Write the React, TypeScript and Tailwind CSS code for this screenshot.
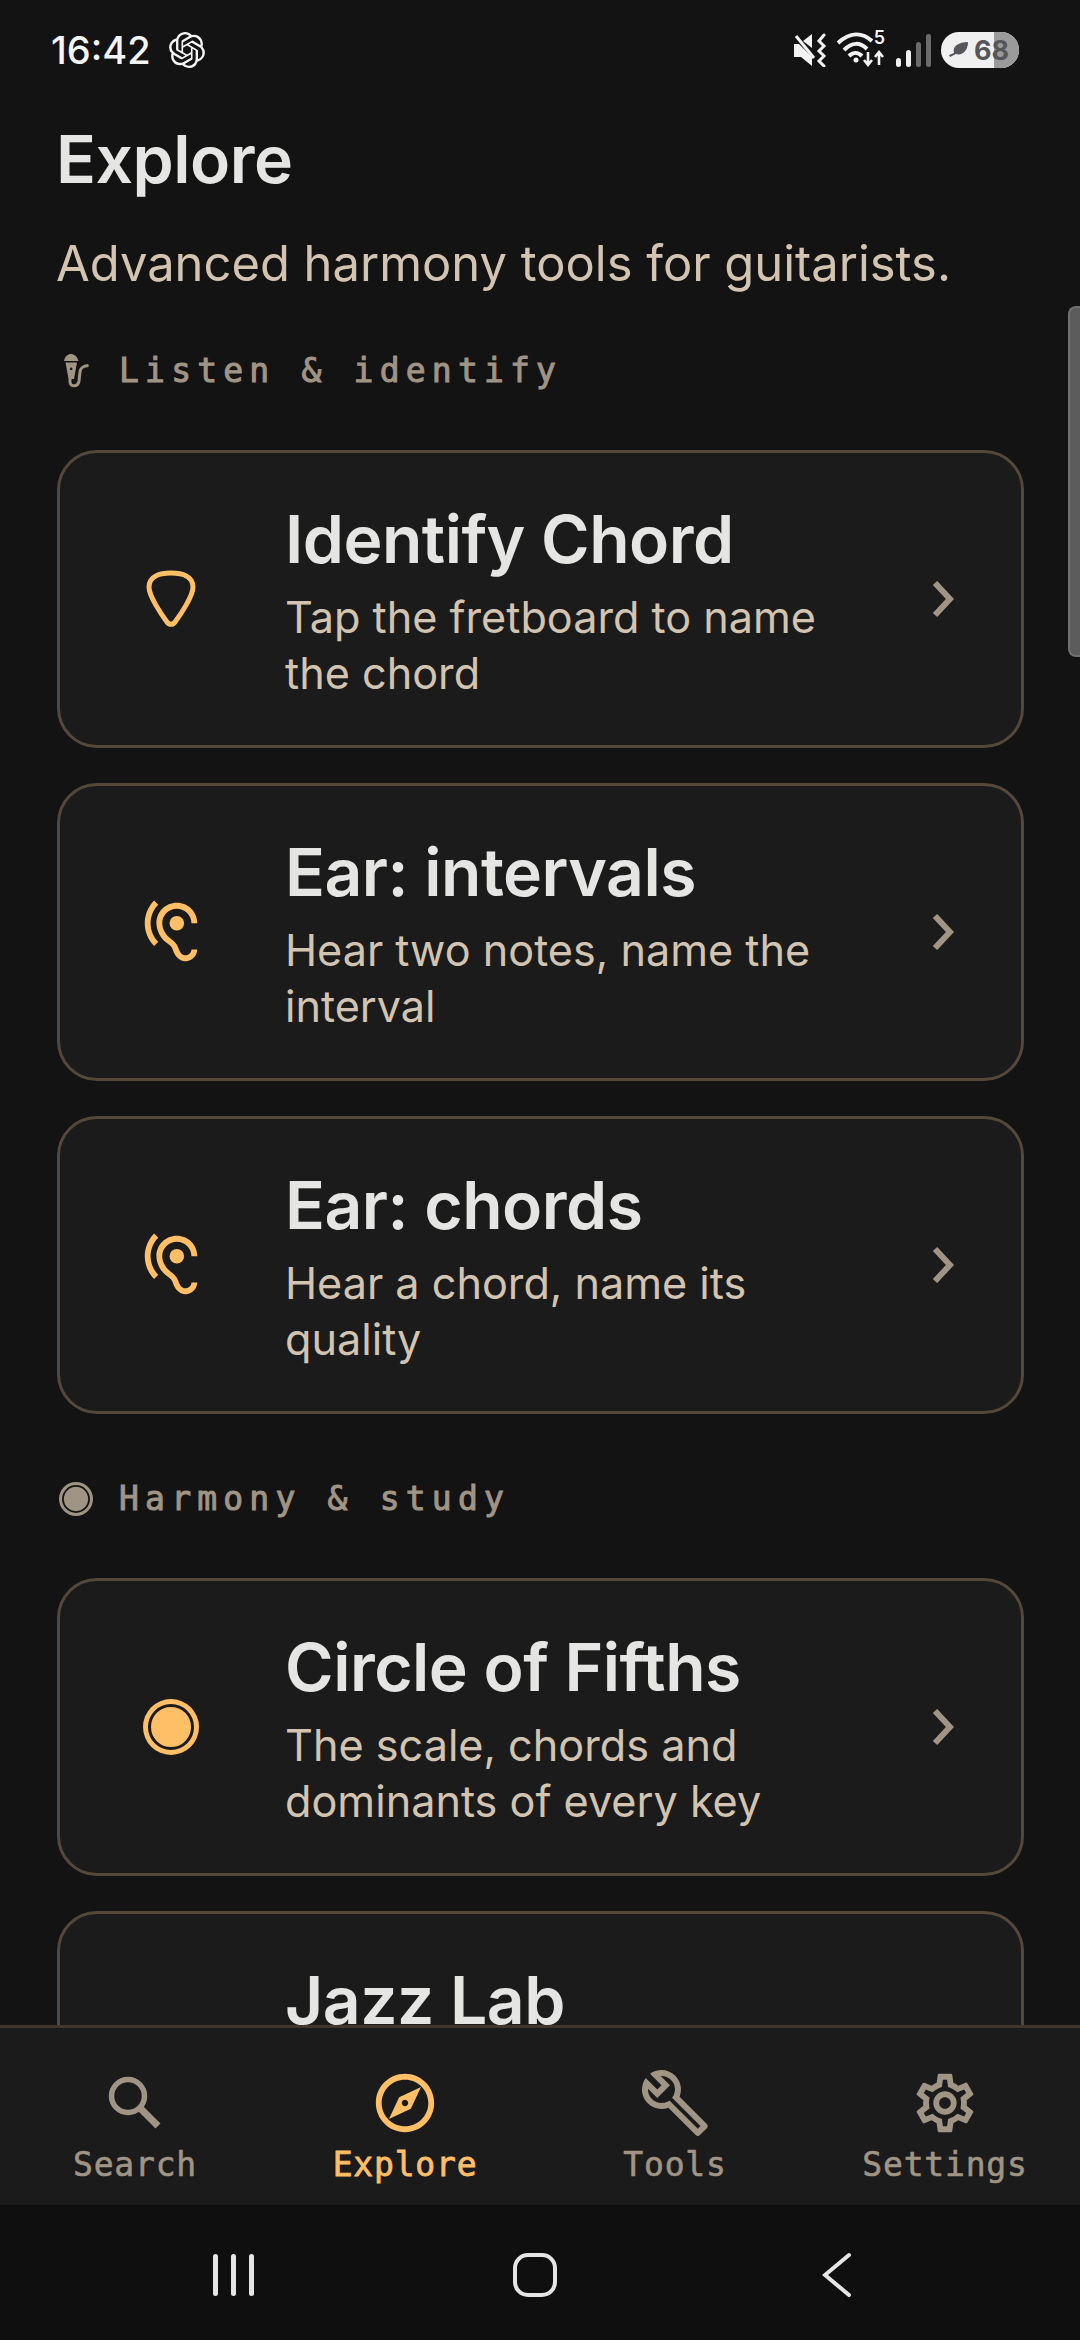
import { MdHearing, MdOutlineExplore, MdOutlineBuild, MdOutlineSettings } from 'react-icons/md'
import { SiOpenai } from 'react-icons/si'

const inter = 'font-["Inter",sans-serif]'
const mono = 'font-["DejaVu_Sans_Mono",monospace]'

function PickIcon() {
  return (
    <svg width="50" height="58" viewBox="0 0 50 58" fill="none" stroke="#ffbf66" strokeWidth="5">
      <path d="M25 3 C36 3 47 6 47 17 C47 26 35 44 29 52 C27 55 23 55 21 52 C15 44 3 26 3 17 C3 6 14 3 25 3 Z" />
    </svg>
  )
}

function DiscIcon({ color, size, gap }: { color: string; size: number; gap: string }) {
  return (
    <svg width={size} height={size} viewBox="0 0 56 56">
      <circle cx="28" cy="28" r="28" fill={color} />
      <circle cx="28" cy="28" r="21.5" fill={color} stroke={gap} strokeWidth="3" />
    </svg>
  )
}

function MicIcon() {
  return (
    <svg width="25" height="34" viewBox="0 0 25 34" fill="#a09484">
      <path d="M0 7 C1 2 4 0 7 0 C10 0 13 2 14.5 7 Z" />
      <path d="M1.5 8.5 H13 L10 25 H4.5 Z M7.2 13.5 a1.3 1.3 0 1 0 0.01 0 Z" fillRule="evenodd" />
      <path d="M6 25 V28 C6 33 14 33.5 15 27 L16 18 C16.5 13 20 12 24.5 11.5" fill="none" stroke="#a09484" strokeWidth="3" />
    </svg>
  )
}

function MuteIcon() {
  return (
    <svg width="36" height="34" viewBox="0 0 36 34" fill="#f2f2f2">
      <path d="M1 11 H6 L19 24 V33 L8 24 H1 Z" />
      <path d="M10 8 L19 1 V15 Z" />
      <path d="M3 3 L21 25" stroke="#f2f2f2" strokeWidth="3" />
      <path d="M31 2 L26 8 L31 13 L26 18 L31 23 L26 28 L31 33" fill="none" stroke="#f2f2f2" strokeWidth="3" strokeLinecap="round" />
    </svg>
  )
}

function WifiIcon() {
  return (
    <div className="relative w-[50px] h-[36px]">
      <svg width="50" height="36" viewBox="0 0 50 36" fill="none" stroke="#f2f2f2" strokeWidth="4">
        <path d="M2 11 C14 0 26 0 36 9" />
        <path d="M8 18 C16 10 24 10 31 17" />
        <path d="M13 24 C17 20 22 20 26 24" />
        <circle cx="20" cy="28" r="2.5" fill="#f2f2f2" stroke="none" />
        <path d="M32 20 V32 M28 28 L32 33 L36 28 M43 33 V21 M39 25 L43 20 L47 25" strokeWidth="2.6" />
      </svg>
      <span className="absolute right-[1px] top-[-3px] text-[18px] leading-none font-semibold text-[#f2f2f2]">5</span>
    </div>
  )
}

function SignalIcon() {
  return (
    <div className="flex items-end gap-[5px]">
      <div className="w-[5px] h-[9px] rounded-full bg-[#f2f2f2]" />
      <div className="w-[5px] h-[17px] rounded-full bg-[#f2f2f2]" />
      <div className="w-[5px] h-[25px] rounded-full bg-[#6b6b6b]" />
      <div className="w-[5px] h-[33px] rounded-full bg-[#6b6b6b]" />
    </div>
  )
}

function Battery() {
  return (
    <div className="relative w-[78px] h-[36px] rounded-full overflow-hidden bg-[#f0f0f0] flex items-center">
      <div className="absolute right-0 top-0 bottom-0 w-[25px] bg-[#9a9a9a]" />
      <svg className="relative ml-[8px]" width="20" height="18" viewBox="0 0 20 18" fill="#55555a">
        <path d="M5 12 C3 5 10 1 19 1 C19 10 13 15 7 13 L1 16 L0 14 Z" />
      </svg>
      <span className={`relative ml-[5px] text-[27px] leading-none font-bold text-[#55555a] ${inter}`}>68</span>
    </div>
  )
}

function Chevron() {
  return (
    <svg width="22" height="36" viewBox="0 0 22 36" fill="none" stroke="#a09484" strokeWidth="6" className="mr-[67px] shrink-0">
      <path d="M3 2 L18 18 L3 34" />
    </svg>
  )
}

function Card({ icon, title, desc }: { icon: React.ReactNode; title: string; desc: string[] }) {
  return (
    <div className="h-[298px] shrink-0 rounded-[40px] border-[3px] border-[#54483a] bg-[#1b1b1b] flex items-center">
      <div className="w-[222px] mr-[3px] shrink-0 flex justify-center">{icon}</div>
      <div className="flex-1 pt-[4px]">
        <h2 className="text-[66px] leading-[76px] font-semibold text-[#e5e5e3] tracking-[-0.5px]">{title}</h2>
        <div className="mt-[12px]">
          {desc.map((d, i) => (
            <p key={i} className="text-[43.2px] leading-[56px] text-[#d3c4b1]">{d}</p>
          ))}
        </div>
      </div>
      <Chevron />
    </div>
  )
}

function SectionLabel({ icon, label }: { icon: React.ReactNode; label: string }) {
  return (
    <div className="flex items-center h-[50px]">
      <div className="w-[62px] shrink-0">{icon}</div>
      <span className={`text-[33px] tracking-[6.2px] text-[#a09484] [-webkit-text-stroke:1px_#a09484] ${mono}`}>{label}</span>
    </div>
  )
}

function Tab({ icon, label, active }: { icon: React.ReactNode; label: string; active?: boolean }) {
  return (
    <div className="flex-1 flex flex-col items-center pt-[41px]">
      <div className="h-[68px] flex items-center justify-center">{icon}</div>
      <span className={`mt-[5px] text-[33px] tracking-[0.8px] leading-[46px] ${mono} ${active ? 'text-[#ffbf66] [-webkit-text-stroke:0.8px_#ffbf66]' : 'text-[#a09484] [-webkit-text-stroke:0.6px_#a09484]'}`}>{label}</span>
    </div>
  )
}

export default function App() {
  const ear = <MdHearing size={70} color="#ffbf66" />
  return (
    <div className={`relative w-[1080px] h-[2340px] overflow-hidden bg-[#131313] flex flex-col ${inter}`}>
      {/* status bar */}
      <div className="h-[100px] shrink-0 flex items-center justify-between pl-[51px] pr-[61px]">
        <div className="flex items-center gap-[18px]">
          <span className="text-[38px] font-medium text-[#f4f4f4]">16:42</span>
          <SiOpenai size={36} color="#f4f4f4" />
        </div>
        <div className="flex items-center gap-[10px]">
          <div className="mr-[-3px]"><MuteIcon /></div>
          <WifiIcon />
          <SignalIcon />
          <Battery />
        </div>
      </div>

      {/* page */}
      <div className="flex-1 min-h-0 overflow-hidden pl-[57px] pr-[56px]">
        <h1 className="ml-[-1px] text-[66px] leading-[76px] font-semibold text-[#e5e5e3] tracking-[-0.5px] mt-[21px]">Explore</h1>
        <p className="ml-[-1px] mt-[37px] text-[48.9px] leading-[60px] text-[#d3c4b1]">Advanced harmony tools for guitarists.</p>
        <div className="mt-[52px]">
          <SectionLabel icon={<div className="ml-[7px]"><MicIcon /></div>} label="Listen & identify" />
        </div>
        <div className="mt-[54px] flex flex-col gap-[35px]">
          <Card icon={<PickIcon />} title="Identify Chord" desc={['Tap the fretboard to name', 'the chord']} />
          <Card icon={ear} title="Ear: intervals" desc={['Hear two notes, name the', 'interval']} />
          <Card icon={ear} title="Ear: chords" desc={['Hear a chord, name its', 'quality']} />
        </div>
        <div className="mt-[60px]">
          <SectionLabel icon={<div className="ml-[2px]"><DiscIcon color="#a09484" size={34} gap="#131313" /></div>} label="Harmony & study" />
        </div>
        <div className="mt-[54px] flex flex-col gap-[35px]">
          <Card icon={<DiscIcon color="#ffbf66" size={56} gap="#1b1b1b" />} title="Circle of Fifths" desc={['The scale, chords and', 'dominants of every key']} />
          <Card icon={<div />} title="Jazz Lab" desc={['\u00a0', '\u00a0']} />
        </div>
      </div>

      {/* tab bar */}
      <div className="h-[180px] shrink-0 border-t-[3px] border-[#3f372c] bg-[#1b1b1b] flex">
        <Tab label="Search" icon={
          <svg width="54" height="54" viewBox="0 0 54 54" fill="none" stroke="#a09484" strokeWidth="5.5"><circle cx="20" cy="20" r="16.5" /><path d="M32 32 L50 50" strokeWidth="7" /></svg>
        } />
        <Tab label="Explore" active icon={<MdOutlineExplore size={70} color="#ffbf66" />} />
        <Tab label="Tools" icon={<MdOutlineBuild size={72} color="#a09484" />} />
        <Tab label="Settings" icon={<MdOutlineSettings size={70} color="#a09484" />} />
      </div>

      {/* android nav */}
      <div className="h-[135px] shrink-0 bg-[#0f0f0f] flex items-center justify-center pr-[10px] pt-[5px]">
        <div className="w-[302px] flex justify-center gap-[13px]">
          <div className="w-[5px] h-[42px] rounded bg-[#e5e5e5]" />
          <div className="w-[5px] h-[42px] rounded bg-[#e5e5e5]" />
          <div className="w-[5px] h-[42px] rounded bg-[#e5e5e5]" />
        </div>
        <div className="w-[302px] flex justify-center">
          <div className="w-[44px] h-[44px] rounded-[15px] border-[4px] border-[#e5e5e5]" />
        </div>
        <div className="w-[302px] flex justify-center">
          <svg width="30" height="46" viewBox="0 0 30 46" fill="none" stroke="#e5e5e5" strokeWidth="4" strokeLinecap="round"><path d="M27 3 L3 23 L27 43" /></svg>
        </div>
      </div>

      {/* scrollbar */}
      <div className="absolute right-0 top-[306px] w-[12px] h-[351px] rounded-l-[8px] bg-[#5c5c5c] border-l-2 border-y-2 border-[#707070]" />
    </div>
  )
}
